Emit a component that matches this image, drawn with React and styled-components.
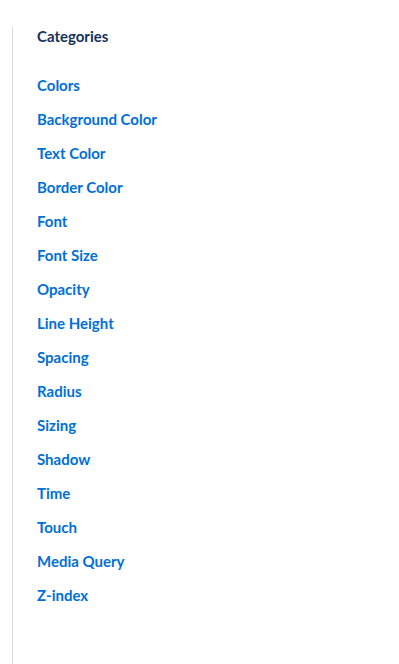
import styled, { createGlobalStyle } from 'styled-components'

const GlobalStyle = createGlobalStyle`
  html, body {
    margin: 0;
    padding: 0;
    background: #ffffff;
  }
  body {
    font-family: Lato, "Open Sans", "Liberation Sans", sans-serif;
  }
`

const Sidebar = styled.nav`
  margin: 27px 0 0 12px;
  min-height: 637px;
  border-left: 1px solid #dddbda;
  padding: 0 0 0 24px;
  box-sizing: border-box;
`

const Heading = styled.h2`
  margin: 0;
  font-size: 15px;
  line-height: 18px;
  font-weight: 700;
  color: #16325c;
`

const LinkList = styled.ul`
  list-style: none;
  margin: 23px 0 0;
  padding: 0;
  display: flex;
  flex-direction: column;
`

const LinkItem = styled.li`
  height: 34px;
  display: flex;
  align-items: center;
`

const NavLink = styled.a`
  font-size: 15px;
  font-weight: 700;
  color: #0070d2;
  text-decoration: none;
`

const categories = [
  'Colors',
  'Background Color',
  'Text Color',
  'Border Color',
  'Font',
  'Font Size',
  'Opacity',
  'Line Height',
  'Spacing',
  'Radius',
  'Sizing',
  'Shadow',
  'Time',
  'Touch',
  'Media Query',
  'Z-index',
]

export default function App() {
  return (
    <>
      <GlobalStyle />
      <Sidebar>
        <Heading>Categories</Heading>
        <LinkList>
          {categories.map((name) => (
            <LinkItem key={name}>
              <NavLink href="#">{name}</NavLink>
            </LinkItem>
          ))}
        </LinkList>
      </Sidebar>
    </>
  )
}
